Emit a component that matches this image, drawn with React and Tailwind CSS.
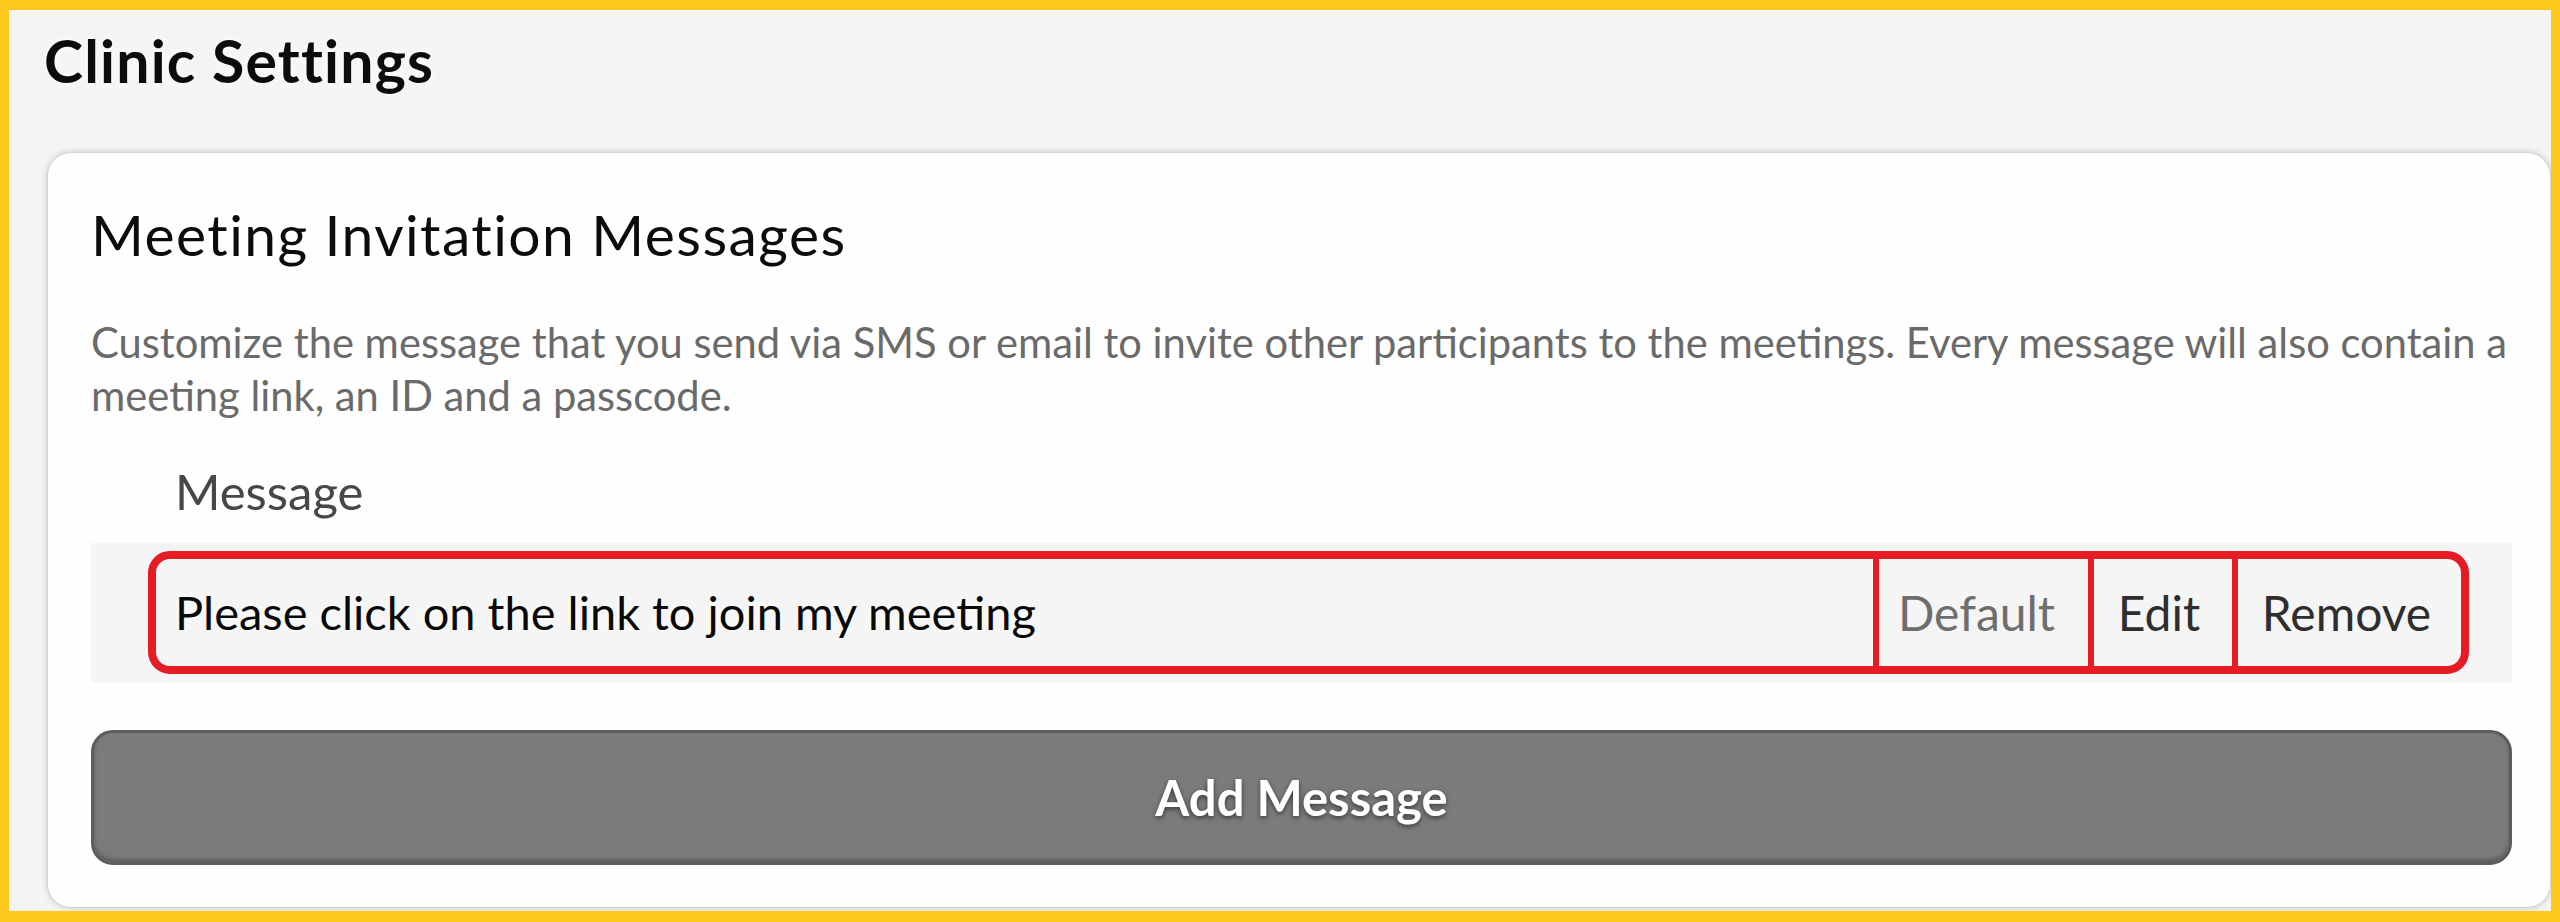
import React from "react";

function MessageRow({ text }) {
  return (
    <div className="bg-[#f5f5f5] pl-[57px] pr-[43px] py-[8px]">
      <div className="flex h-[123px] rounded-[22px] border-[8px] border-[#e51c23]">
        <div className="flex-1 flex items-center pl-[19px] text-[47px] text-[#0a0a0a] [text-shadow:0_0_6px_#ffffff]">
          {text}
        </div>
        <div className="w-[215px] flex items-center justify-center pr-[14px] border-l-[6px] border-[#e51c23] text-[48px] text-[#6e6e6e]">
          Default
        </div>
        <div className="w-[144px] flex items-center justify-center pr-[8px] border-l-[6px] border-[#e51c23] text-[48px] text-[#2e2e2e]">
          Edit
        </div>
        <div className="w-[229px] flex items-center justify-center pr-[6px] border-l-[6px] border-[#e51c23] text-[48px] text-[#2e2e2e]">
          Remove
        </div>
      </div>
    </div>
  );
}

export default function App() {
  return (
    <div className="h-[922px] overflow-hidden flex flex-col bg-[#f4f4f4] border-t-[10px] border-l-[9px] border-r-[9px] border-b-[11px] border-[#fdc81e] font-['Lato','Noto_Sans',sans-serif]">
      {/* page title */}
      <h1 className="mt-[19px] ml-[35px] text-[59px] leading-[64px] font-bold tracking-[0.02em] text-[#0c0c0c] [text-shadow:0_0_8px_#ffffff]">
        Clinic Settings
      </h1>

      {/* settings card */}
      <div className="flex-1 mt-[59px] ml-[38px] mb-[3px] rounded-[24px] bg-[#fefefe] border border-[#d4d4d4] shadow-[0_0_6px_rgba(0,0,0,0.18)] pt-[49px] pl-[43px] pr-[38px]">
        <h2 className="text-[57px] leading-[64px] tracking-[0.025em] text-[#0c0c0c]">
          Meeting Invitation Messages
        </h2>

        <p className="mt-[50px] text-[41.7px] leading-[53px] text-[#6a6a6a] whitespace-nowrap">
          Customize the message that you send via SMS or email to invite other participants to the meetings. Every message will also contain a
          <br />
          meeting link, an ID and a passcode.
        </p>

        <div className="mt-[40px] pl-[84px] text-[49px] leading-[58px] text-[#474747]">
          Message
        </div>

        <div className="mt-[23px]">
          <MessageRow text="Please click on the link to join my meeting" />
        </div>

        <button className="mt-[48px] w-full h-[135px] rounded-[22px] bg-[#7b7b7b] border-[3px] border-[#5c5c5c] shadow-[inset_0_-3px_4px_rgba(0,0,0,0.25)] text-white text-[49px] font-bold [text-shadow:0_2px_5px_rgba(0,0,0,0.55)]">
          Add Message
        </button>
      </div>
    </div>
  );
}
